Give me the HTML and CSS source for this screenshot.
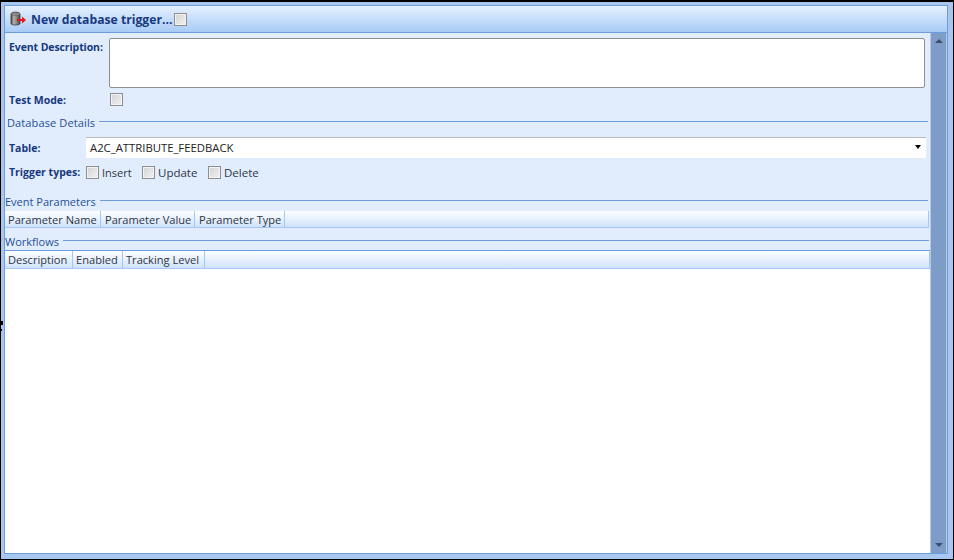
FILE: index.html
```html
<!DOCTYPE html>
<html lang="en">
<head>
<meta charset="utf-8">
<title>New database trigger</title>
<link rel="stylesheet" href="styles.css">
</head>
<body>
<div class="window">
  <span class="cursor-bit cursor-a"></span>
  <span class="cursor-bit cursor-b"></span>
  <div class="panel">
    <header class="title">
      <svg class="title-icon" width="16" height="16" viewBox="0 0 16 16">
        <defs>
          <linearGradient id="cyl" x1="0" x2="1" y1="0" y2="0">
            <stop offset="0" stop-color="#46423f"/>
            <stop offset=".3" stop-color="#b5b1ad"/>
            <stop offset=".65" stop-color="#87827e"/>
            <stop offset="1" stop-color="#45413e"/>
          </linearGradient>
        </defs>
        <path d="M1 3c0-2.500 9-2.500 9 0v9.500c0 2-9 2-9 0z" fill="url(#cyl)" stroke="#3f3b38" stroke-width=".8"/>
        <ellipse cx="5.500" cy="3" rx="4.200" ry="1.300" fill="#9c9894" stroke="#4a4643" stroke-width=".5"/>
        <path d="M7 8h5V5.500L16 9l-4 3.500V10H7z" fill="#e8141c"/>
      </svg>
      <span class="title-text">New database trigger...</span>
      <span class="check"></span>
    </header>
    <div class="content">
      <main class="form">
        <div class="row-desc">
          <label class="lbl lbl-wide lbl-desc">Event Description:</label>
          <div class="textarea"></div>
        </div>
        <div class="row-test">
          <label class="lbl lbl-wide">Test Mode:</label>
          <span class="check"></span>
        </div>
        <div class="legend legend-db"><span>Database Details</span><i></i></div>
        <div class="row-table">
          <label class="lbl lbl-table">Table:</label>
          <div class="select"><span>A2C_ATTRIBUTE_FEEDBACK</span><b class="caret"></b></div>
        </div>
        <div class="row-types">
          <label class="lbl lbl-types">Trigger types:</label>
          <span class="check"></span><span class="opt opt-insert">Insert</span>
          <span class="check"></span><span class="opt opt-update">Update</span>
          <span class="check"></span><span class="opt">Delete</span>
        </div>
        <div class="legend legend-ep"><span>Event Parameters</span><i></i></div>
        <div class="grid-head grid-ep">
          <span class="col c-pn">Parameter Name</span>
          <span class="col c-pv">Parameter Value</span>
          <span class="col c-pt">Parameter Type</span>
        </div>
        <div class="legend legend-wf"><span>Workflows</span><i></i></div>
        <div class="grid-head grid-wf">
          <span class="col c-d">Description</span>
          <span class="col c-e">Enabled</span>
          <span class="col c-t">Tracking Level</span>
        </div>
        <div class="grid-body"></div>
      </main>
      <aside class="scrollbar">
        <span class="arrow arrow-up"></span>
        <span class="arrow arrow-down"></span>
      </aside>
    </div>
  </div>
</div>
</body>
</html>
```
FILE: styles.css
```css
* { box-sizing: border-box; }
html, body { margin: 0; padding: 0; }
body {
  width: 954px;
  height: 560px;
  overflow: hidden;
  font-family: "Open Sans", "Noto Sans", sans-serif;
  font-size: 11.1px;
  color: #2f3644;
}
.window {
  position: relative;
  width: 954px;
  height: 560px;
  border: 1px solid #000;
  border-top-width: 2px;
  background: #a9c6ee;
  padding: 3px 5px 5px 3px;
}
.cursor-bit { position: absolute; left: -1px; background: #000; }
.cursor-a { top: 319px; width: 3px; height: 4px; }
.cursor-b { top: 327px; width: 2px; height: 2px; }
.panel {
  height: 100%;
  border: 1px solid #6d9ddc;
  display: flex;
  flex-direction: column;
}
.title {
  flex: none;
  height: 27px;
  border-bottom: 1px solid #6d9ddc;
  background: linear-gradient(#e6f0fe, #a8cbf6);
  display: flex;
  align-items: center;
  padding-left: 5px;
}
.title-icon { flex: none; margin-right: 5px; }
.title-text {
  font-size: 12.2px;
  font-weight: 700;
  color: #17397f;
  margin-right: 2px;
}
.content { flex: 1; display: flex; min-height: 0; }
.form {
  flex: none;
  width: 925px;
  background: #e1edfd;
  display: flex;
  flex-direction: column;
}
.check {
  flex: none;
  display: inline-block;
  width: 13px;
  height: 13px;
  border: 1px solid #8e8e8e;
  background: linear-gradient(135deg, #d2d2d2, #f2f2f2);
  box-shadow: inset 0 0 0 1px #f3f3f3;
}
.lbl { font-weight: 700; color: #17397f; font-size: 10.5px; }
.lbl-wide { flex: none; width: 100px; }
.row-desc { display: flex; padding: 5px 5px 0 4px; height: 55px; }
.row-desc .lbl-desc { padding-top: 2px; letter-spacing: -0.1px; }
.textarea {
  flex: 1;
  height: 50px;
  background: #fff;
  border: 1px solid #8f8f8f;
  border-radius: 2px;
}
.row-test { display: flex; align-items: center; padding-left: 4px; height: 23px; }
.row-test .lbl-wide { width: 101px; }
.legend { flex: none; display: flex; align-items: center; color: #1f4f98; font-size: 11px; height: 16px; }
.legend span { margin-right: 4px; padding-top: 3px; }
.legend i { flex: 1; height: 1px; background: #6d9ddc; }
.legend-db { padding: 0 2px 0 2px; margin-top: 2px; letter-spacing: 0.12px; }
.legend-ep { padding-right: 2px; margin-top: 10px; }
.legend-wf { margin-top: 4px; padding-right: 1px; }
.legend-wf span { padding-top: 2px; }
.row-table { flex: none; display: flex; align-items: center; padding: 0 4px 0 4px; margin-top: 8px; height: 21px; }
.lbl-table { flex: none; width: 77px; }
.select {
  flex: 1;
  height: 21px;
  background: #fff;
  border-top: 1px solid #b9b9c0;
  display: flex;
  align-items: center;
  justify-content: space-between;
  padding: 0 5px 2px 4px;
  color: #222;
  font-size: 11.3px;
}
.caret { width: 0; height: 0; border: 3.5px solid transparent; border-top: 4px solid #000; border-bottom: 0; }
.row-types { flex: none; display: flex; align-items: center; padding-left: 4px; height: 20px; margin-top: 4px; font-size: 11.5px; }
.lbl-types { flex: none; width: 77px; }
.opt { margin-left: 3px; }
.opt-insert { width: 40px; font-size: 11px; }
.opt-update { width: 50px; }
.grid-head {
  flex: none;
  display: flex;
  background: linear-gradient(#fff, #cfe2fb);
  border-bottom: 1px solid #a3c7f7;
}
.grid-ep { height: 17px; margin: 3px 1px 0 0; border-right: 1px solid #a3c7f7; }
.grid-wf { height: 19px; margin-top: 2px; border-top: 1px solid #6d9ddc; border-right: 1px solid #a3c7f7; }
.col {
  flex: none;
  padding-left: 3px;
  border-right: 1px solid #a3c7f7;
  white-space: nowrap;
}
.grid-ep .col { line-height: 17px; }
.grid-wf .col { line-height: 18px; }
.c-pn { width: 96px; }
.grid-ep .c-pv { width: 94px; padding-left: 4px; }
.grid-ep .c-pt { width: 90px; padding-left: 4px; }
.c-d { width: 68px; }
.c-e { width: 50px; }
.c-t { width: 82px; }
.grid-body { flex: 1; background: #fff; }
.scrollbar {
  flex: 1;
  background: linear-gradient(90deg, #b7cbe8 0, #b7cbe8 1px, #7d9dc8 1px, #7d9dc8 16px, #b7cbe8 16px);
  display: flex;
  flex-direction: column;
  justify-content: space-between;
  align-items: center;
  padding: 6px 0;
}
.arrow { width: 0; height: 0; border-left: 4px solid transparent; border-right: 4px solid transparent; }
.arrow-up { border-bottom: 4px solid #3d4f6e; }
.arrow-down { border-top: 4px solid #3d4f6e; }
```
